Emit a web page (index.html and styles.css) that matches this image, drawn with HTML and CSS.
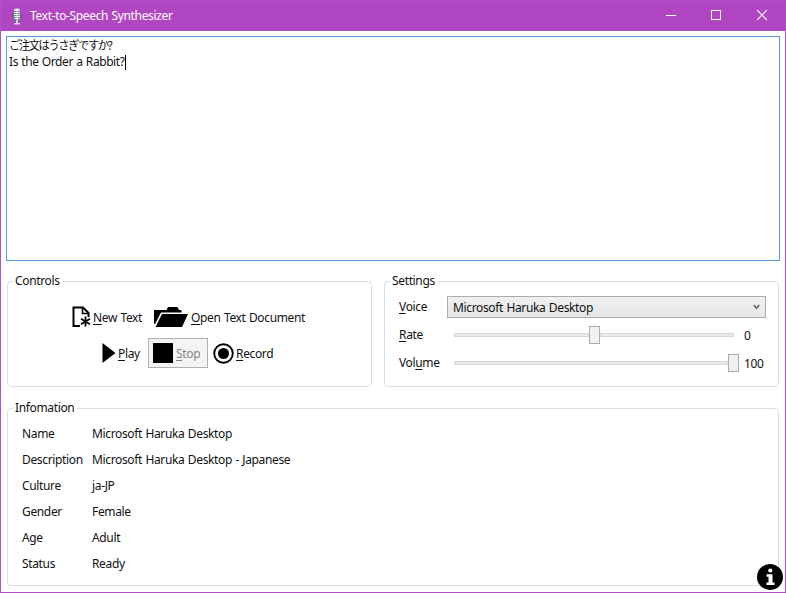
FILE: index.html
```html
<!DOCTYPE html>
<html lang="en">
<head>
<meta charset="utf-8">
<title>Text-to-Speech Synthesizer</title>
<link rel="stylesheet" href="styles.css">
</head>
<body>
<div class="window">
  <header class="titlebar">
    <svg class="mic" width="12" height="17" viewBox="0 0 12 17"><path d="M1.500 6v4l2 3h5l2-3V6" fill="none" stroke="#566b70"/><rect x="3" y=".5" width="6" height="11" rx="2" fill="#dce9e5"/><path d="M3 3.500h6M3 5.500h6M3 7.500h6M3 9.500h6" stroke="#708886"/><path d="M6 1v10" stroke="#f2f7f5"/><path d="M5 12h2v3h2v1.500H3V15h2z" fill="#cbdad5"/></svg>
    <h1>Text-to-Speech Synthesizer</h1>
    <div class="captions">
      <svg width="46" height="30" viewBox="0 0 46 30"><path d="M18 14.500h10" stroke="#fff"/></svg>
      <svg width="46" height="30" viewBox="0 0 46 30"><path d="M17.500 9.500h9v9h-9z" fill="none" stroke="#fff"/></svg>
      <svg width="46" height="30" viewBox="0 0 46 30"><path d="M17.200 9.200l9.600 9.600M26.800 9.200l-9.600 9.600" stroke="#fff" stroke-width="1.200"/></svg>
    </div>
  </header>
  <main>
    <div class="editor"><div class="ja" lang="ja">ご注文はうさぎですか?</div><div class="line">Is the Order a Rabbit?<i class="caret"></i></div></div>
    <div class="middle">
      <fieldset class="controls">
        <legend>Controls</legend>
        <div class="row first">
          <div class="action new"><svg width="20" height="22" viewBox="0 0 20 22"><path d="M8 20H1.500V1.500H11L16.500 7v4" fill="none" stroke="#000" stroke-width="2"/><path d="M10.500 1.500V7.500H17" fill="none" stroke="#000" stroke-width="1.500"/><path d="M13.500 10.500v10M9 12.800l9 5.400M18 12.800l-9 5.400" stroke="#000" stroke-width="1.800"/></svg><span><u>N</u>ew Text</span></div>
          <div class="action open"><svg width="35" height="22" viewBox="0 0 35 22"><path d="M0 18V4h12.500l1.500-3h9.500L25 4h2.500v2.500H7L1 18z"/><path d="M8 8H34L28 21H1.500z"/></svg><span><u>O</u>pen Text Document</span></div>
        </div>
        <div class="row second">
          <div class="action play"><svg width="14" height="20" viewBox="0 0 14 20"><path d="M.5 0L13.500 10 .5 20z"/></svg><span><u>P</u>lay</span></div>
          <div class="action stop"><svg width="20" height="20" viewBox="0 0 20 20"><path d="M0 0h20v20H0z"/></svg><span><u>S</u>top</span></div>
          <div class="action record"><svg width="21" height="21" viewBox="0 0 21 21"><circle cx="10.500" cy="10.500" r="9.300" fill="none" stroke="#000" stroke-width="1.900"/><circle cx="10.500" cy="10.500" r="5.500"/></svg><span><u>R</u>ecord</span></div>
        </div>
      </fieldset>
      <fieldset class="settings">
        <legend>Settings</legend>
        <div class="setting"><label><u>V</u>oice</label><div class="combo"><span>Microsoft Haruka Desktop</span><svg width="7" height="6" viewBox="0 0 7 6"><path d="M.8 1l2.700 3.300L6.200 1" fill="none" stroke="#606060" stroke-width="1.400"/></svg></div></div>
        <div class="setting"><label><u>R</u>ate</label><div class="slider"><i class="track before"></i><i class="thumb"></i><i class="track"></i></div><output>0</output></div>
        <div class="setting"><label>Vol<u>u</u>me</label><div class="slider"><i class="track"></i><i class="thumb"></i></div><output>100</output></div>
      </fieldset>
    </div>
    <fieldset class="information">
      <legend>Infomation</legend>
      <dl>
        <dt>Name</dt><dd>Microsoft Haruka Desktop</dd>
        <dt>Description</dt><dd>Microsoft Haruka Desktop - Japanese</dd>
        <dt>Culture</dt><dd>ja-JP</dd>
        <dt>Gender</dt><dd>Female</dd>
        <dt>Age</dt><dd>Adult</dd>
        <dt>Status</dt><dd>Ready</dd>
      </dl>
    </fieldset>
  </main>
  <svg class="about" width="26" height="26" viewBox="0 0 26 26"><circle cx="13" cy="13" r="13"/><circle cx="13.300" cy="6.500" r="2.100" fill="#fff"/><path d="M9.500 10.200h6v8.300h2V21h-8v-2.500h2v-5.800h-2z" fill="#fff"/></svg>
</div>
</body>
</html>
```
FILE: styles.css
```css
* { box-sizing: border-box; }
body { margin: 0; font: 12px/16px "Noto Sans", "Noto Sans CJK JP", sans-serif; letter-spacing: -.35px; word-spacing: .6px; color: #111; }
svg { display: block; flex: none; }
u { text-underline-offset: 2px; text-decoration-thickness: 1px; text-decoration-skip-ink: none; }
.window { position: relative; width: 786px; height: 593px; border: 1px solid #b14fc5; background: #fff; overflow: hidden; }
.titlebar { display: flex; align-items: center; height: 30px; background: #b146c2; padding-left: 10px; color: #fff; }
.titlebar h1 { margin: 0 auto 0 7px; font-size: 12px; font-weight: 400; }
.captions { display: flex; margin-right: -1px; }
main { padding: 5px 5px 0; }
.editor { height: 225px; border: 1px solid #569de5; padding: 1px 2px; }
.editor div { height: 16px; white-space: nowrap; }
.editor .ja { width: 120px; letter-spacing: -1.5px; transform: scaleX(.94); transform-origin: left; }
.line { display: flex; align-items: center; letter-spacing: -.42px; }
.caret { width: 1px; height: 15px; background: #000; }
fieldset { margin: 0; border: 1px solid #d5dfe5; border-radius: 4px; padding: 0; min-width: 0; }
legend { margin-left: 5px; padding: 0 3px 0 2px; height: 16px; }
.middle { display: flex; gap: 12px; margin: 12px 0 0 1px; }
.controls { width: 365px; height: 114px; }
.settings { width: 395px; height: 114px; }
.row { display: flex; align-items: center; }
.action { display: flex; align-items: center; gap: 2px; white-space: nowrap; }
.first { padding: 17px 0 0 64px; }
.first span { padding-top: 2px; }
.new { width: 82px; gap: 1px; }
.second { padding: 10px 0 0 94px; }
.second span { padding-top: 1px; }
.play { width: 46px; }
.stop { width: 60px; height: 30px; border: 1px solid #adb2b5; background: #f4f4f4; color: #838383; padding-left: 4px; gap: 3px; margin-right: 5px; }
.setting { display: flex; align-items: center; height: 28px; padding-left: 14px; }
.settings .setting:nth-child(2) { margin-top: 4px; }
.setting label { width: 48px; }
.combo { display: flex; align-items: center; justify-content: space-between; width: 319px; height: 22px; border: 1px solid #acacac; background: linear-gradient(#f0f0f0, #e5e5e5); padding: 0 5px; }
.combo span { padding-top: 1px; }
.slider { display: flex; align-items: center; width: 285px; margin-left: 7px; }
.track { flex: 1; height: 4px; border: 1px solid #d6d6d6; background: #e7eaea; }
.track.before { flex: none; width: 135px; }
.slider:has(.before) { width: 280px; margin-right: 5px; }
.thumb { width: 11px; height: 18px; border: 1px solid #acacac; background: #f0f0f0; }
output { margin-left: 5px; padding-top: 2px; }
.information { width: 772px; height: 186px; margin: 13px 0 0 1px; }
dl { display: grid; grid-template-columns: 70px 1fr; grid-auto-rows: 26px; align-items: center; margin: 5px 0 0 14px; }
dd { margin: 0; }
.about { position: absolute; right: 2px; bottom: 2px; }
```
